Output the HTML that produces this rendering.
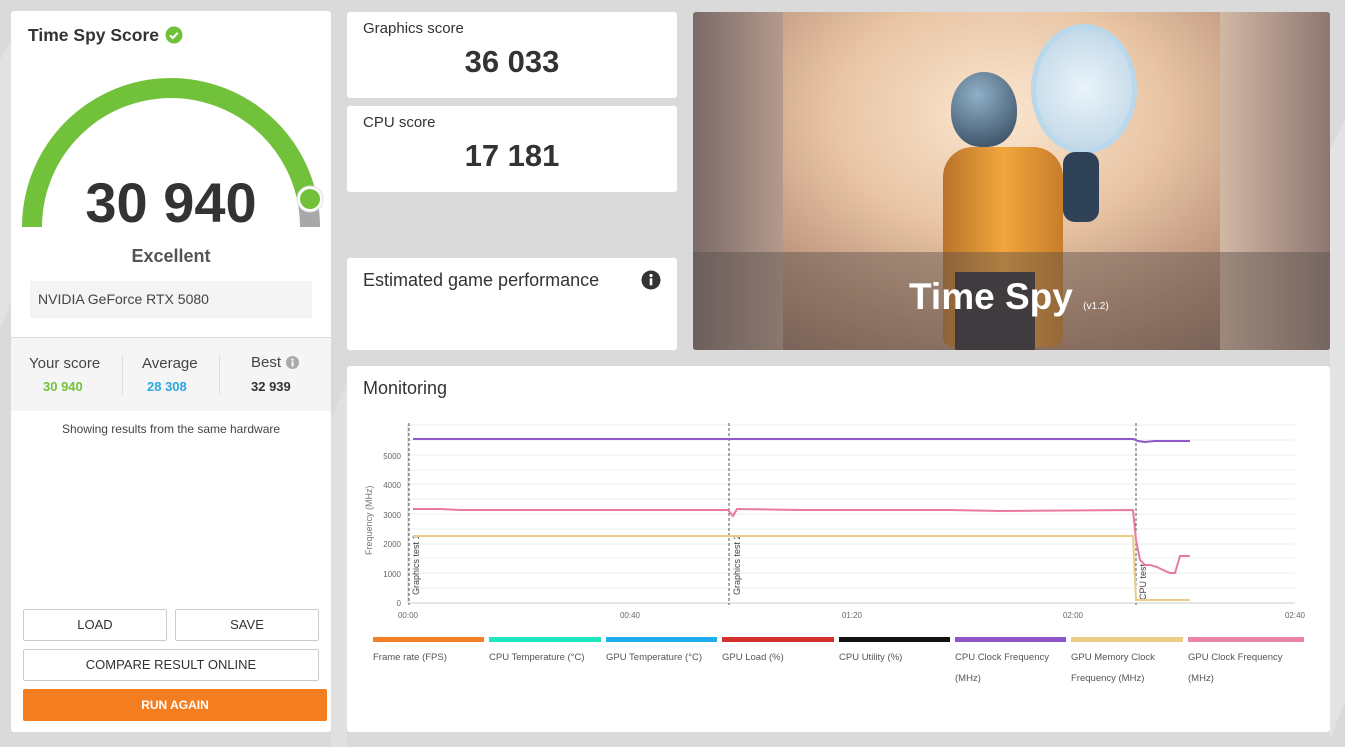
<!DOCTYPE html>
<html><head><meta charset="utf-8"><style>
*{box-sizing:border-box;margin:0;padding:0}
body{width:1345px;height:747px;overflow:hidden;background:#dadada;font-family:"Liberation Sans",sans-serif;color:#333;position:relative}
.card{position:absolute;background:#fff;border-radius:3px}
.t{position:absolute;white-space:nowrap}
.btn{position:absolute;border:1px solid #ccc;background:#fff;font-size:13px;color:#333;text-align:center;line-height:30px;border-radius:2px}
.lt{position:absolute;top:647px;font-size:9.5px;color:#555;line-height:21px;width:110px}
</style></head><body>
<svg width="1345" height="747" style="position:absolute;left:0;top:0">
<polygon points="0,60 11,40 11,300 0,330" fill="#e2e2e2"/>
<polygon points="331,420 347,380 347,747 331,747" fill="#e0e0e0"/>
<polygon points="1330,150 1345,120 1345,700 1330,740" fill="#e3e3e3"/>
</svg>
<!-- left card -->
<div class="card" style="left:11px;top:11px;width:320px;height:721px"></div>
<div class="t" style="left:28px;top:25px;font-size:17.5px;font-weight:bold;color:#333">Time Spy Score</div>
<svg style="position:absolute;left:165px;top:26px" width="18" height="18"><circle cx="9" cy="9" r="8.5" fill="#6fc13a"/><path d="M5 9.3l2.8 2.7 5-5.2" stroke="#fff" stroke-width="2" fill="none"/></svg>
<svg style="position:absolute;left:0;top:0" width="340" height="240">
<path d="M32 227 A139 139 0 0 1 307.2 199.3" stroke="#72c13a" stroke-width="20" fill="none"/>
<path d="M307.2 199.3 A139 139 0 0 1 310 227" stroke="#a8a8a8" stroke-width="20" fill="none"/>
<circle cx="310" cy="199" r="13" fill="#fff" stroke="#ddd" stroke-width="1"/>
<circle cx="310" cy="199" r="10" fill="#72c13a"/>
</svg>
<div class="t" style="left:11px;width:320px;text-align:center;top:170px;font-size:56px;font-weight:bold;color:#333">30 940</div>
<div class="t" style="left:11px;width:320px;text-align:center;top:246px;font-size:18px;font-weight:bold;color:#555">Excellent</div>
<div style="position:absolute;left:30px;top:281px;width:282px;height:37px;background:#f4f4f4"></div>
<div class="t" style="left:38px;top:291px;font-size:14px;color:#444">NVIDIA GeForce RTX 5080</div>
<div style="position:absolute;left:11px;top:337px;width:320px;height:74px;background:#f5f5f5;border-top:1px solid #ddd"></div>
<div style="position:absolute;left:122px;top:355px;width:1px;height:40px;background:#ddd"></div>
<div style="position:absolute;left:219px;top:355px;width:1px;height:40px;background:#ddd"></div>
<div class="t" style="left:29px;top:355px;font-size:15px;color:#444">Your score</div>
<div class="t" style="left:43px;top:379px;font-size:13px;font-weight:bold;color:#72c13a">30 940</div>
<div class="t" style="left:142px;top:355px;font-size:15px;color:#444">Average</div>
<div class="t" style="left:147px;top:379px;font-size:13px;font-weight:bold;color:#2aa7e0">28 308</div>
<div class="t" style="left:251px;top:354px;font-size:15px;color:#444">Best</div>
<svg style="position:absolute;left:286px;top:356px" width="13" height="13"><circle cx="6.5" cy="6.5" r="6.5" fill="#aaa"/><rect x="5.6" y="5.5" width="1.9" height="5" fill="#fff"/><circle cx="6.5" cy="3.6" r="1.1" fill="#fff"/></svg>
<div class="t" style="left:251px;top:379px;font-size:13px;font-weight:bold;color:#333">32 939</div>
<div class="t" style="left:11px;width:320px;text-align:center;top:422px;font-size:12px;color:#444">Showing results from the same hardware</div>
<div class="btn" style="left:23px;top:609px;width:144px;height:32px">LOAD</div>
<div class="btn" style="left:175px;top:609px;width:144px;height:32px">SAVE</div>
<div class="btn" style="left:23px;top:649px;width:296px;height:32px">COMPARE RESULT ONLINE</div>
<div class="btn" style="left:23px;top:689px;width:304px;height:32px;background:#f47d20;border-color:#f47d20;color:#fff;font-weight:bold;font-size:12px">RUN AGAIN</div>
<!-- score cards -->
<div class="card" style="left:347px;top:12px;width:330px;height:86px"></div>
<div class="t" style="left:363px;top:20px;font-size:15px;color:#333">Graphics score</div>
<div class="t" style="left:347px;width:330px;text-align:center;top:44px;font-size:31px;font-weight:bold;color:#333">36 033</div>
<div class="card" style="left:347px;top:106px;width:330px;height:86px"></div>
<div class="t" style="left:363px;top:114px;font-size:15px;color:#333">CPU score</div>
<div class="t" style="left:347px;width:330px;text-align:center;top:138px;font-size:31px;font-weight:bold;color:#333">17 181</div>
<div class="card" style="left:347px;top:258px;width:330px;height:92px"></div>
<div class="t" style="left:363px;top:270px;font-size:18px;color:#333">Estimated game performance</div>
<svg style="position:absolute;left:641px;top:270px" width="20" height="20"><circle cx="10" cy="10" r="9.5" fill="#333"/><rect x="8.7" y="8.3" width="2.6" height="7" fill="#fff"/><circle cx="10" cy="5.5" r="1.6" fill="#fff"/></svg>
<!-- image -->
<div style="position:absolute;left:693px;top:12px;width:637px;height:338px;border-radius:3px;overflow:hidden;background:radial-gradient(ellipse at 48% 30%,#fbe6cf 0%,#e9c5a5 35%,#b28a72 70%,#6f5a55 100%)">
<div style="position:absolute;left:0;top:0;width:90px;height:338px;background:linear-gradient(90deg,#7a6a68,#b39a8c)"></div>
<div style="position:absolute;right:0;top:0;width:110px;height:338px;background:linear-gradient(270deg,#8d7771,#d2b8a4)"></div>
<div style="position:absolute;left:258px;top:60px;width:66px;height:75px;border-radius:50% 50% 45% 45%;background:radial-gradient(circle at 40% 30%,#8fb0c8,#2e4256)"></div>
<div style="position:absolute;left:250px;top:135px;width:120px;height:200px;border-radius:30px 30px 10px 10px;background:linear-gradient(90deg,#b8732a,#f2a63c 50%,#c77d2a)"></div>
<div style="position:absolute;left:262px;top:260px;width:80px;height:80px;background:#2a2a33"></div>
<div style="position:absolute;left:338px;top:12px;width:106px;height:130px;border-radius:50%;border:5px solid #b9d8ec;background:radial-gradient(circle,#e9f4fb,#b9d1e2)"></div>
<div style="position:absolute;left:370px;top:140px;width:36px;height:70px;background:#2f4258;border-radius:12px"></div>
<div style="position:absolute;left:0;top:240px;width:637px;height:98px;background:rgba(90,80,75,0.45)"></div>
<div class="t" style="left:216px;top:264px;font-size:37px;font-weight:bold;color:#fff">Time Spy <span style="font-size:10px;font-weight:normal">(v1.2)</span></div>
</div>
<!-- monitoring -->
<div class="card" style="left:347px;top:366px;width:983px;height:366px"></div>
<div class="t" style="left:363px;top:378px;font-size:18px;color:#333">Monitoring</div>
<svg style="position:absolute;left:0;top:0" width="1345" height="747" font-family="Liberation Sans, sans-serif">
<g stroke="#ececec" stroke-width="1">
<line x1="408" y1="425" x2="1295" y2="425"/><line x1="408" y1="440" x2="1295" y2="440"/><line x1="408" y1="455" x2="1295" y2="455"/><line x1="408" y1="470" x2="1295" y2="470"/><line x1="408" y1="484" x2="1295" y2="484"/><line x1="408" y1="499" x2="1295" y2="499"/><line x1="408" y1="514" x2="1295" y2="514"/><line x1="408" y1="529" x2="1295" y2="529"/><line x1="408" y1="544" x2="1295" y2="544"/><line x1="408" y1="558" x2="1295" y2="558"/><line x1="408" y1="573" x2="1295" y2="573"/><line x1="408" y1="588" x2="1295" y2="588"/>
</g>
<line x1="408" y1="603" x2="1295" y2="603" stroke="#ccc"/>
<line x1="408" y1="425" x2="408" y2="603" stroke="#ccc"/>
<g font-size="8" fill="#666" text-anchor="end">
<text x="401" y="606">0</text><text x="401" y="577">1000</text><text x="401" y="547">2000</text><text x="401" y="518">3000</text><text x="401" y="488">4000</text><text x="401" y="459">5000</text>
</g>
<g font-size="8" fill="#666" text-anchor="middle">
<text x="408" y="618">00:00</text><text x="630" y="618">00:40</text><text x="852" y="618">01:20</text><text x="1073" y="618">02:00</text><text x="1295" y="618">02:40</text>
</g>
<text transform="translate(372,555) rotate(-90)" font-size="9" fill="#777">Frequency (MHz)</text>
<g stroke="#555" stroke-dasharray="3,2" stroke-width="1">
<line x1="409" y1="423" x2="409" y2="605"/><line x1="729" y1="423" x2="729" y2="605"/><line x1="1136" y1="423" x2="1136" y2="605"/>
</g>
<g font-size="9" fill="#444">
<text transform="translate(419,595) rotate(-90)">Graphics test 1</text>
<text transform="translate(740,595) rotate(-90)">Graphics test 2</text>
<text transform="translate(1146,600) rotate(-90)">CPU test</text>
</g>
<polyline points="413,439 1133,439 1138,441 1145,442 1155,441 1165,441 1176,441 1190,441" fill="none" stroke="#9058c8" stroke-width="2"/>
<polyline points="413,536 1133,536 1136,600 1190,600" fill="none" stroke="#e8cd82" stroke-width="2"/>
<polyline points="413,509 440,509 460,510 720,510 728,510 733,516 737,509 800,510 950,510 1000,511 1133,510 1136,540 1140,560 1145,565 1150,565 1157,567 1163,570 1170,573 1175,573 1180,556 1190,556" fill="none" stroke="#e8799f" stroke-width="2"/>
<rect x="373" y="637" width="111" height="5" fill="#f57f26"/>
<rect x="489" y="637" width="112" height="5" fill="#1fe8c0"/>
<rect x="606" y="637" width="111" height="5" fill="#1eaef0"/>
<rect x="722" y="637" width="112" height="5" fill="#d32f2f"/>
<rect x="839" y="637" width="111" height="5" fill="#111"/>
<rect x="955" y="637" width="111" height="5" fill="#8e56c8"/>
<rect x="1071" y="637" width="112" height="5" fill="#e8cd82"/>
<rect x="1188" y="637" width="116" height="5" fill="#ea84a8"/>
</svg>
<div class="lt" style="left:373px">Frame rate (FPS)</div>
<div class="lt" style="left:489px">CPU Temperature (°C)</div>
<div class="lt" style="left:606px">GPU Temperature (°C)</div>
<div class="lt" style="left:722px">GPU Load (%)</div>
<div class="lt" style="left:839px">CPU Utility (%)</div>
<div class="lt" style="left:955px">CPU Clock Frequency<br>(MHz)</div>
<div class="lt" style="left:1071px">GPU Memory Clock<br>Frequency (MHz)</div>
<div class="lt" style="left:1188px">GPU Clock Frequency<br>(MHz)</div>
</body></html>
